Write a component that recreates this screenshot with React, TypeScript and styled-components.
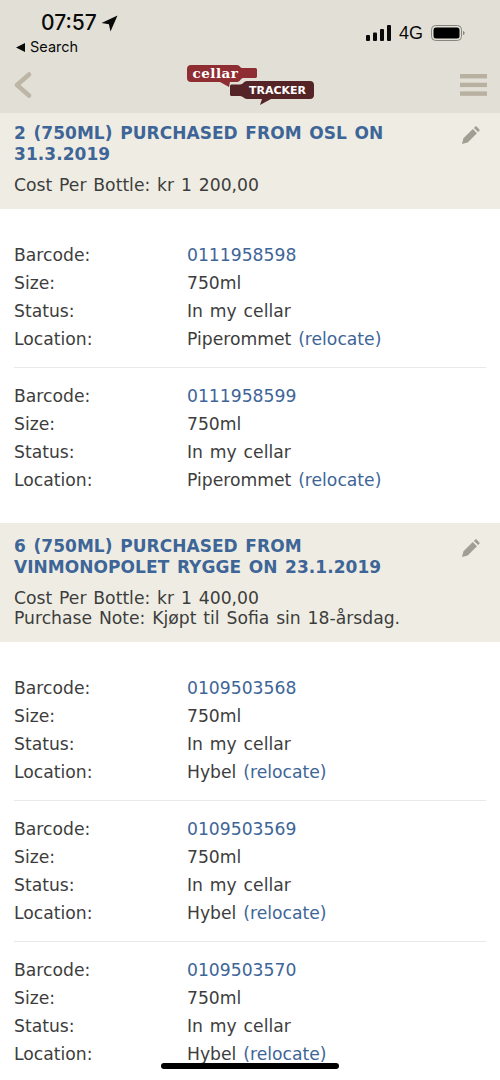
import React from "react";
import styled, { createGlobalStyle } from "styled-components";

const Global = createGlobalStyle`
  html, body { margin: 0; padding: 0; background: #fff; }
  body { font-family: "DejaVu Sans", Verdana, sans-serif; }
`;

const Page = styled.div`
  position: relative;
  width: 500px;
  height: 1080px;
  overflow: hidden;
  background: #fff;
  color: #3d3d3d;
  font-size: 17.2px;
  word-spacing: 1.4px;
`;

const Top = styled.header`
  position: relative;
  z-index: 1;
  height: 113px;
  background: #e2e0d6;
  display: flex;
  flex-direction: column;
  word-spacing: 0;
`;

const StatusBar = styled.div`
  height: 57px;
  display: flex;
  justify-content: space-between;
  padding: 10px 0 0 15px;
  box-sizing: border-box;
  color: #0a0a0a;
  font-family: Inter, "Liberation Sans", sans-serif;
`;

const StatusLeft = styled.div`
  display: flex;
  flex-direction: column;
`;

const TimeRow = styled.div`
  display: flex;
  align-items: center;
  gap: 4px;
  padding-left: 26px;
  font-size: 21px;
  font-weight: 500;
  line-height: 26px;
`;

const BackRow = styled.div`
  display: flex;
  align-items: center;
  gap: 5px;
  font-size: 14.5px;
  line-height: 18px;
  margin-top: 2px;
`;

const StatusRight = styled.div`
  display: flex;
  align-items: center;
  height: 46px;
  padding-right: 34px;
  font-size: 18px;
  font-family: "Liberation Sans", sans-serif;
`;

const NetworkLabel = styled.span`
  margin: 0 8px 0 7px;
`;

const NavBar = styled.div`
  flex: 1;
  display: grid;
  grid-template-columns: 1fr auto 1fr;
  align-items: center;
  padding: 0 13px 1px 13px;
`;

const NavRight = styled.div`
  display: flex;
  justify-content: flex-end;
`;

const Section = styled.section<{ $first: boolean }>`
  background: #efede3;
  padding: 13px 14px 13px;
  position: relative;
  margin-top: ${(p) => (p.$first ? "-3px" : "0")};
`;

const Title = styled.h2`
  margin: 0 40px 0 0;
  color: #3e6597;
  font-size: 17px;
  line-height: 21px;
  font-weight: 700;
  text-transform: uppercase;
  word-spacing: 1.6px;
  letter-spacing: 0.05px;
`;

const Meta = styled.div`
  margin-top: 10px;
  line-height: 20.6px;
`;

const EditIcon = styled.svg`
  position: absolute;
  right: 20px;
  top: 16px;
`;

const List = styled.div`
  padding: 32px 14px 29px;
`;

const Bottle = styled.div<{ $first: boolean }>`
  display: grid;
  grid-template-columns: 173px 1fr;
  grid-auto-rows: 28px;
  align-items: center;
  ${(p) => (p.$first ? "" : "border-top: 1px solid #e8e8e8; margin-top: 14px; padding-top: 14px;")}
`;

const Link = styled.a`
  color: #3e6597;
`;

const HomeBar = styled.div`
  position: absolute;
  left: 161px;
  top: 1063px;
  width: 178px;
  height: 6px;
  border-radius: 3px;
  background: #000;
`;

const Logo = () => (
  <svg width="127" height="41" viewBox="0 0 127 41">
    <path
      d="M4 1h46c3 0 3 3 5 3h13c1.500 0 2 .5 2 2v6c0 1.500-.5 2-2 2H56c-2 0-3 4-6 4H43l-1 5-9-5H4c-2.500 0-4-1.500-4-4V5c0-2.500 1.500-4 4-4z"
      fill="#8f2e32"
    />
    <text x="5.500" y="13.500" fontFamily="'DejaVu Serif', serif" fontWeight="700" fontSize="13.500" letterSpacing="0.5" fill="#fff">
      cellar
    </text>
    <path
      d="M43 22c0-1 1-1.500 2-1.500h8c3 0 4-3.500 7-3.500h63c2.500 0 4 1.500 4 4v10c0 2.500-1.500 4-4 4H84l-11 6 2-6H60c-3 0-4-3-7-3h-8c-1 0-2-.5-2-1.500z"
      fill="#552426"
    />
    <text x="62" y="30" fontFamily="'DejaVu Sans', sans-serif" fontWeight="700" fontSize="11" fill="#fff">
      TRACKER
    </text>
  </svg>
);

const Pencil = () => (
  <EditIcon width="19" height="19" viewBox="0 0 20 20">
    <path d="M1 19l1.600-6L12.400 3.200l4.400 4.400L7 17.400z M13.600 2l1.400-1.400c.4-.4 1-.4 1.400 0l3 3c.4.4.4 1 0 1.400L18 6.400z" fill="#a29e93" />
  </EditIcon>
);

type BottleData = { code: string; loc: string };
type Group = { title: string; meta: string[]; bottles: BottleData[] };

const groups: Group[] = [
  {
    title: "2 (750ml) purchased from OSL on 31.3.2019",
    meta: ["Cost Per Bottle: kr 1 200,00"],
    bottles: [
      { code: "0111958598", loc: "Piperommet" },
      { code: "0111958599", loc: "Piperommet" },
    ],
  },
  {
    title: "6 (750ml) purchased from Vinmonopolet Rygge on 23.1.2019",
    meta: ["Cost Per Bottle: kr 1 400,00", "Purchase Note: Kjøpt til Sofia sin 18-årsdag."],
    bottles: [
      { code: "0109503568", loc: "Hybel" },
      { code: "0109503569", loc: "Hybel" },
      { code: "0109503570", loc: "Hybel" },
    ],
  },
];

export default function App() {
  return (
    <Page>
      <Global />
      <Top>
        <StatusBar>
          <StatusLeft>
            <TimeRow>
              07:57
              <svg width="17" height="17" viewBox="0 0 17 17">
                <path d="M16.500 0.500L0.500 8l7.400 1.200L9.500 16.500z" fill="#0a0a0a" />
              </svg>
            </TimeRow>
            <BackRow>
              <svg width="9" height="9" viewBox="0 0 9 9" style={{ marginLeft: 1 }}>
                <path d="M0 4.500L9 0v9z" fill="#0a0a0a" />
              </svg>
              Search
            </BackRow>
          </StatusLeft>
          <StatusRight>
            <svg width="26" height="16" viewBox="0 0 26 16">
              <rect x="0" y="10" width="4" height="6" rx="1" fill="#0a0a0a" />
              <rect x="7" y="7.500" width="4" height="8.500" rx="1" fill="#0a0a0a" />
              <rect x="14" y="4" width="4" height="12" rx="1" fill="#0a0a0a" />
              <rect x="21" y="0" width="4" height="16" rx="1" fill="#0a0a0a" />
            </svg>
            <NetworkLabel>4G</NetworkLabel>
            <svg width="35" height="17" viewBox="0 0 35 17">
              <rect x="0.500" y="0.500" width="30" height="15" rx="4" fill="none" stroke="#85847f" />
              <rect x="2.500" y="2.500" width="26" height="11" rx="2.500" fill="#000" />
              <path d="M32 6c1 0 1.600 1 1.600 2s-.6 2-1.600 2z" fill="#85847f" />
            </svg>
          </StatusRight>
        </StatusBar>
        <NavBar>
          <svg width="19" height="26" viewBox="0 0 19 26">
            <path d="M16 2.500L4 13l12 10.500" fill="none" stroke="#bdb5a6" strokeWidth="4.500" strokeLinejoin="round" strokeLinecap="round" />
          </svg>
          <Logo />
          <NavRight>
            <svg width="27" height="22" viewBox="0 0 27 22">
              <rect y="0" width="27" height="4.400" fill="#b8b0a1" />
              <rect y="8.700" width="27" height="4.400" fill="#b8b0a1" />
              <rect y="17.400" width="27" height="4.400" fill="#b8b0a1" />
            </svg>
          </NavRight>
        </NavBar>
      </Top>
      {groups.map((g, gi) => (
        <React.Fragment key={g.title}>
          <Section $first={gi === 0}>
            <Title>{g.title}</Title>
            <Pencil />
            <Meta>
              {g.meta.map((m) => (
                <div key={m}>{m}</div>
              ))}
            </Meta>
          </Section>
          <List>
            {g.bottles.map((b, i) => (
              <Bottle key={b.code} $first={i === 0}>
                <div>Barcode:</div>
                <div>
                  <Link>{b.code}</Link>
                </div>
                <div>Size:</div>
                <div>750ml</div>
                <div>Status:</div>
                <div>In my cellar</div>
                <div>Location:</div>
                <div>
                  {b.loc} <Link>(relocate)</Link>
                </div>
              </Bottle>
            ))}
          </List>
        </React.Fragment>
      ))}
      <HomeBar />
    </Page>
  );
}
